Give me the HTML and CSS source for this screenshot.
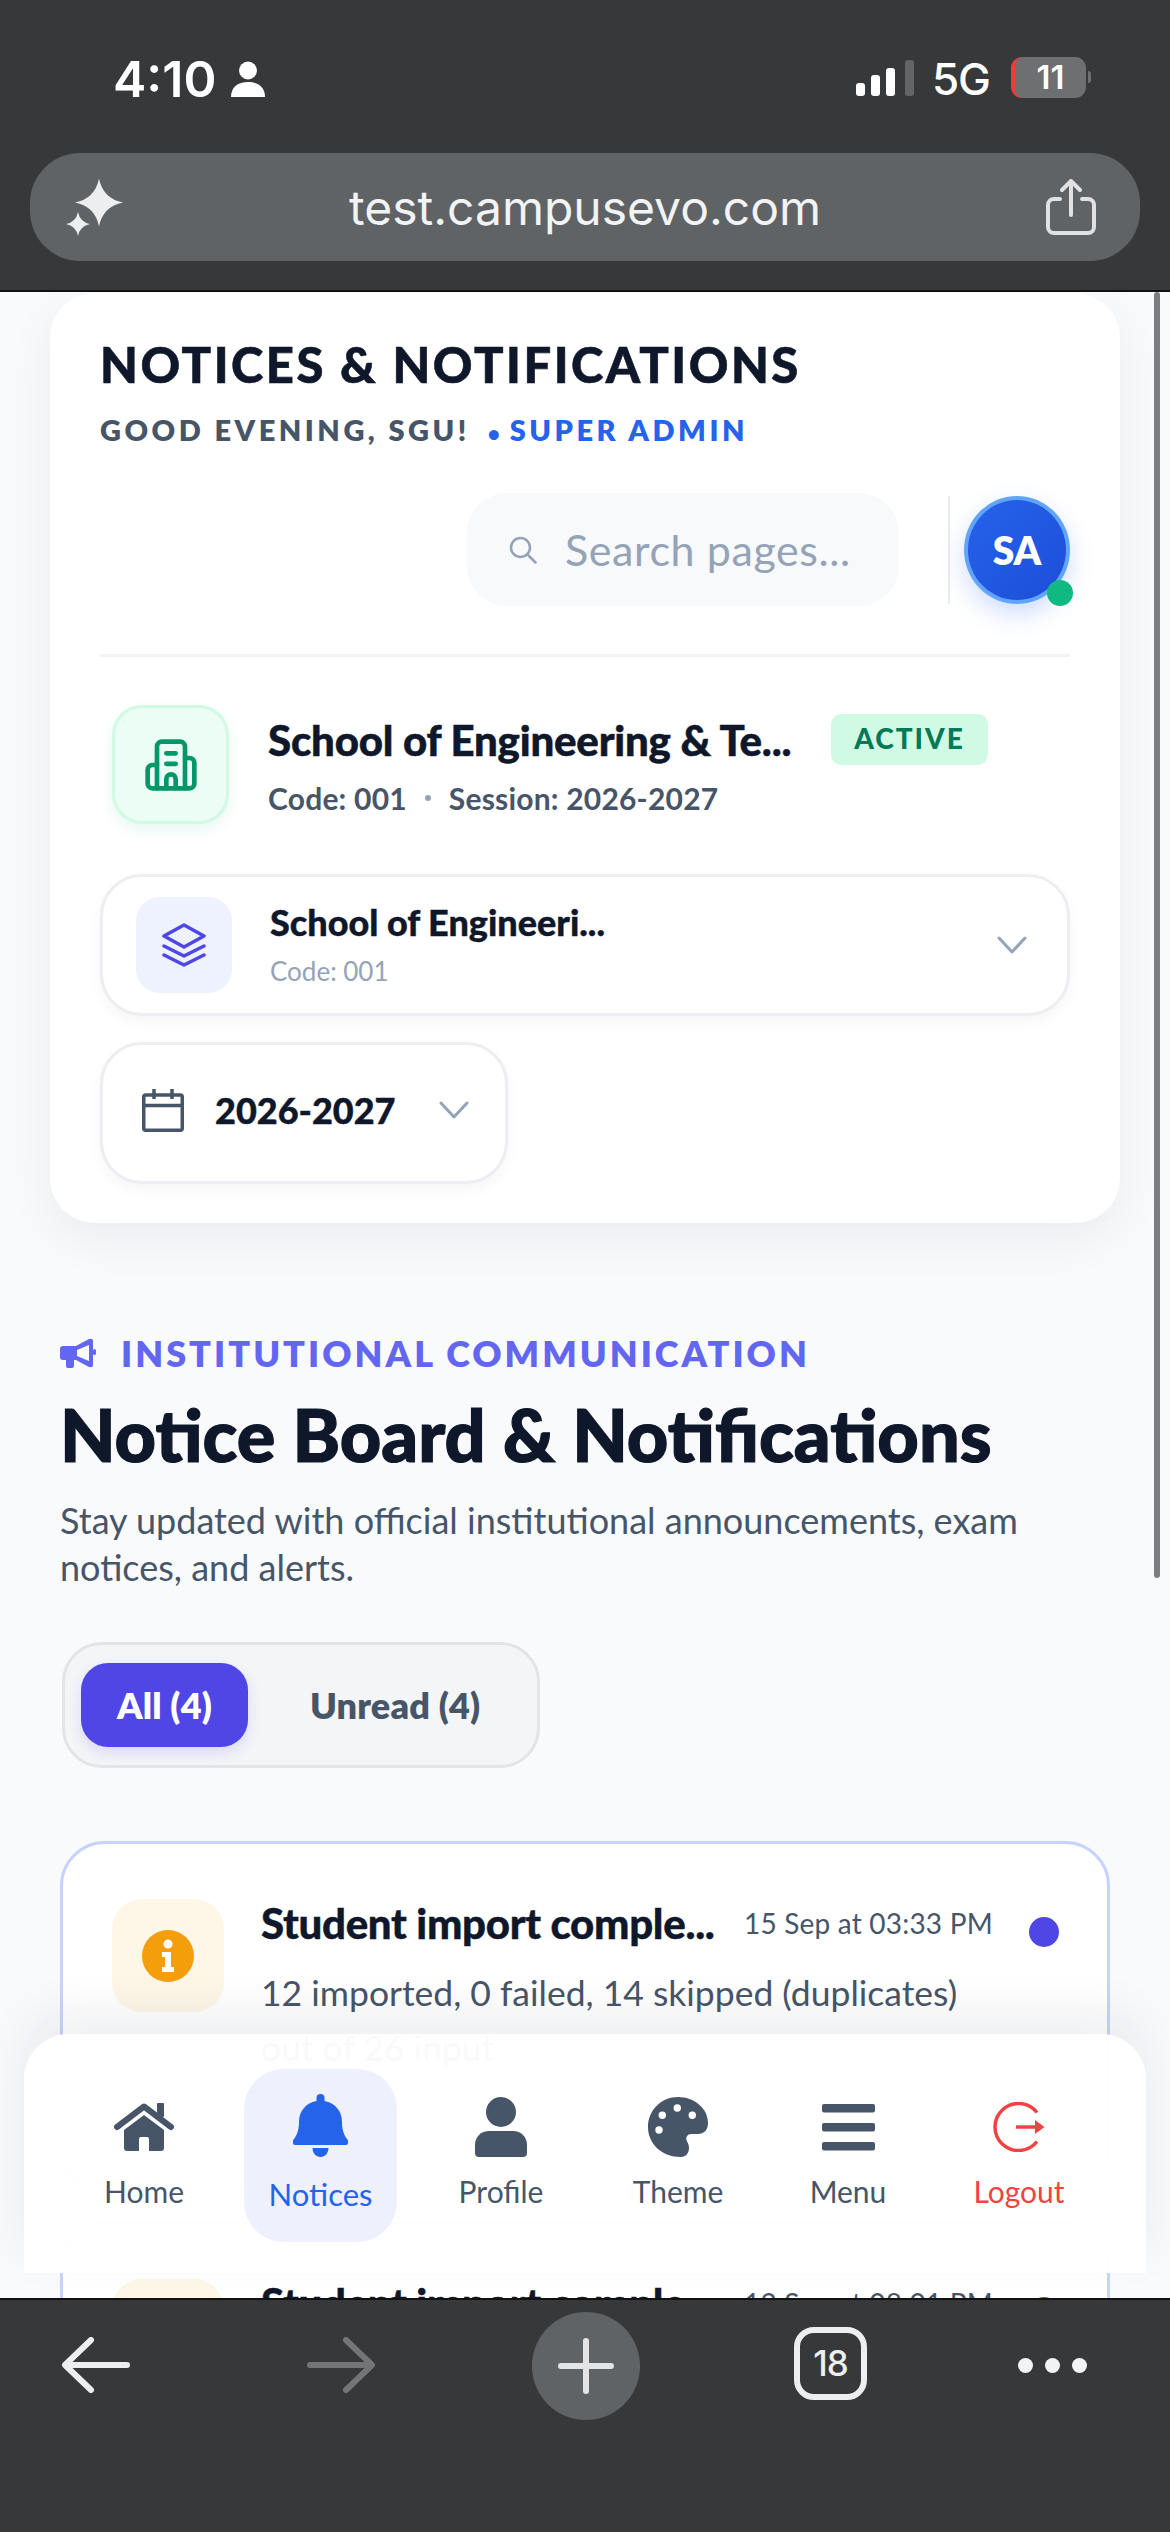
FILE: index.html
```html
<!DOCTYPE html>
<html lang="en">
<head>
  <meta charset="UTF-8">
  <meta name="viewport" content="width=device-width, initial-scale=1.0">
  <title>Notices &amp; Notifications</title>
  <link rel="stylesheet" href="styles.css">
</head>
<body>

  <header class="browser-top">
    <div class="status">
      <div class="status-left">
        <span class="time">4:10</span>
        <svg class="person" viewBox="0 0 34 36"><circle cx="17" cy="9.5" r="9"/><path d="M0 36c0-10 7-15 17-15s17 5 17 15z"/></svg>
      </div>
      <div class="status-right">
        <svg class="signal" viewBox="0 0 58 36">
          <rect x="0" y="23" width="9" height="13" rx="3" fill="#fff"/>
          <rect x="15" y="15" width="9" height="21" rx="3" fill="#fff"/>
          <rect x="30" y="8" width="9" height="28" rx="3" fill="#fff"/>
          <rect x="49" y="0" width="9" height="36" rx="3" fill="#636567"/>
        </svg>
        <span class="net">5G</span>
        <div class="battery"><span>11</span></div>
        <i class="battery-nub"></i>
      </div>
    </div>
    <div class="url-pill">
      <svg class="sparkle" viewBox="0 0 58 58" fill="#eceeef">
        <path d="M33 .5Q37 20.500 57 24.500 37 28.500 33 48.500 29 28.500 9 24.500 29 20.500 33 .5z"/>
        <path d="M12 34Q14 44 24 46 14 48 12 58 10 48 0 46 10 44 12 34z"/>
      </svg>
      <span class="url">test.campusevo.com</span>
      <svg class="share" viewBox="0 0 50 56" fill="none" stroke="#dfe1e2" stroke-width="4" stroke-linecap="round" stroke-linejoin="round">
        <path d="M14 20H8a6 6 0 0 0-6 6v22a6 6 0 0 0 6 6h34a6 6 0 0 0 6-6V26a6 6 0 0 0-6-6h-6"/>
        <path d="M25 36V3M16 11l9-9 9 9"/>
      </svg>
    </div>
  </header>

  <main class="page">
    <section class="top-card">
      <h2 class="page-title">NOTICES &amp; NOTIFICATIONS</h2>
      <p class="greeting">GOOD EVENING, SGU! <span class="role"><span class="role-dot">&bull;</span> SUPER ADMIN</span></p>

      <div class="toolbar">
        <div class="search">
          <svg class="search-icon" viewBox="0 0 28 28" fill="none" stroke="#94a3b8" stroke-width="2.500" stroke-linecap="round"><circle cx="11.500" cy="11.500" r="9.500"/><path d="M18.500 18.500l8 8"/></svg>
          <span>Search pages...</span>
        </div>
        <div class="toolbar-line"></div>
        <div class="avatar">SA<i class="online"></i></div>
      </div>

      <div class="institution">
        <div class="inst-tile">
          <svg viewBox="0 0 24 24" fill="none" stroke="#059669" stroke-width="2" stroke-linecap="round" stroke-linejoin="round"><path d="M6 22V4a2 2 0 0 1 2-2h8a2 2 0 0 1 2 2v18z"/><path d="M6 12H4a2 2 0 0 0-2 2v6a2 2 0 0 0 2 2h2"/><path d="M18 9h2a2 2 0 0 1 2 2v9a2 2 0 0 1-2 2h-2"/><path d="M10 7h4M10 11.500h4M10 22v-4a2 2 0 0 1 4 0v4"/></svg>
        </div>
        <div class="inst-text">
          <div class="inst-head">
            <span class="inst-name">School of Engineering &amp; Te...</span>
            <span class="badge">ACTIVE</span>
          </div>
          <div class="inst-meta">Code: 001 <i class="sep"></i> Session: 2026-2027</div>
        </div>
      </div>

      <div class="select select-wide">
        <div class="layers-tile">
          <svg viewBox="0 0 44 44" fill="none" stroke="#4f46e5" stroke-width="3.500" stroke-linecap="round" stroke-linejoin="round"><path d="M22 2l20 11-20 11L2 13z"/><path d="M2 23l20 10 20-10"/><path d="M2 32l20 10 20-10"/></svg>
        </div>
        <div class="select-text">
          <div class="select-name">School of Engineeri...</div>
          <div class="select-code">Code: 001</div>
        </div>
        <svg class="chevron chevron-end" viewBox="0 0 30 18" fill="none" stroke="#94a3b8" stroke-width="3" stroke-linecap="round" stroke-linejoin="round"><path d="M2 2l13 14L28 2"/></svg>
      </div>

      <div class="select select-small">
        <svg class="calendar" viewBox="0 0 42 43" fill="none" stroke="#475569" stroke-width="3.500"><rect x="1.750" y="6" width="38.500" height="35.250" rx="2"/><path d="M1.750 16.500h38.500M12 0v10M30 0v10"/></svg>
        <span class="select-name">2026-2027</span>
        <svg class="chevron" viewBox="0 0 30 18" fill="none" stroke="#94a3b8" stroke-width="3" stroke-linecap="round" stroke-linejoin="round"><path d="M2 2l13 14L28 2"/></svg>
      </div>
    </section>

    <section class="board">
      <div class="eyebrow">
        <svg viewBox="0 0 36 30" fill="#6366f1"><path fill-rule="evenodd" d="M3 8h13L28 1.500C30 .2 33 .5 33 3v24c0 2.500-3 2.800-5 1.500L16 22h-2v6a2 2 0 0 1-2 2H8a2 2 0 0 1-2-2v-6H3a3 3 0 0 1-3-3v-8a3 3 0 0 1 3-3zM17 12v6l12 5V7z"/><rect x="33" y="11" width="3" height="6" rx="1.500"/></svg>
        <span>INSTITUTIONAL COMMUNICATION</span>
      </div>
      <h1 class="board-title">Notice Board &amp; Notifications</h1>
      <p class="board-desc">Stay updated with official institutional announcements, exam notices, and alerts.</p>

      <div class="tabs">
        <button class="tab tab-on">All (4)</button>
        <button class="tab">Unread (4)</button>
      </div>

      <div class="notice">
        <div class="notice-tile"><svg viewBox="0 0 52 52"><circle cx="26" cy="26" r="26" fill="#f59e0b"/><circle cx="26" cy="14" r="4.500" fill="#fff"/><path d="M20 22h9v15h3v5H20v-5h3V27h-3z" fill="#fff"/></svg></div>
        <div class="notice-body">
          <div class="notice-head">
            <span class="notice-title">Student import comple...</span>
            <span class="notice-date">15 Sep at 03:33 PM</span>
            <i class="unread-dot"></i>
          </div>
          <p class="notice-text">12 imported, 0 failed, 14 skipped (duplicates) out of 26 input</p>
        </div>
      </div>

      <div class="notice">
        <div class="notice-tile"></div>
        <div class="notice-body">
          <div class="notice-head">
            <span class="notice-title">Student import comple...</span>
            <span class="notice-date">12 Sep at 08:01 PM</span>
            <i class="unread-dot"></i>
          </div>
        </div>
      </div>
    </section>

    <div class="scroll-thumb"></div>
  </main>

  <nav class="tabbar">
    <a class="tabbar-item">
      <svg class="ic-home" viewBox="0 0 60 48"><path d="M3 24L30 3.500 57 24" fill="none" stroke="#475569" stroke-width="6" stroke-linecap="round" stroke-linejoin="round"/><rect x="43" y="0" width="7" height="14" rx="1" fill="#475569"/><path d="M10 27L30 12l20 15v18a3 3 0 0 1-3 3H35V36a2 2 0 0 0-2-2h-6a2 2 0 0 0-2 2v12H13a3 3 0 0 1-3-3z" fill="#475569"/></svg>
      <span>Home</span>
    </a>
    <a class="tabbar-item tabbar-on">
      <svg class="ic-bell" viewBox="0 0 55 63" fill="#2563eb"><path d="M27.500 0a4 4 0 0 1 4 4v3C42 9 49 17 49 28c0 8 2 13 5 17 1.500 2 1.500 3 1 4.500-.6 1-1.500 1.500-3 1.500H3c-1.500 0-2.400-.5-3-1.500-.5-1.500-.5-2.500 1-4.500 3-4 5-9 5-17C6 17 13 9 23.500 7V4a4 4 0 0 1 4-4z"/><path d="M19.500 54h16c0 5-3.500 9-8 9s-8-4-8-9z"/></svg>
      <span>Notices</span>
    </a>
    <a class="tabbar-item">
      <svg class="ic-user" viewBox="0 0 52 60" fill="#475569"><circle cx="26" cy="15" r="15"/><path d="M14 34h24c8 0 14 6 14 14v8a4 4 0 0 1-4 4H4a4 4 0 0 1-4-4v-8c0-8 6-14 14-14z"/></svg>
      <span>Profile</span>
    </a>
    <a class="tabbar-item">
      <svg class="ic-palette" viewBox="0 0 60 60"><path d="M30 0c16 0 30 11 30 26 0 7-4 11-10 11h-7c-3 0-5.500 3-4.500 6 .8 2.500 2.500 4 2.500 8 0 5-3 9-8 9C14 60 0 47 0 30S13.500 0 30 0z" fill="#475569"/><circle cx="29.300" cy="11" r="3.700" fill="#fff"/><circle cx="14.300" cy="18.300" r="3.700" fill="#fff"/><circle cx="44.300" cy="18.300" r="3.700" fill="#fff"/><circle cx="11" cy="33" r="3.700" fill="#fff"/></svg>
      <span>Theme</span>
    </a>
    <a class="tabbar-item">
      <svg class="ic-menu" viewBox="0 0 53 47" fill="#475569"><rect width="53" height="8.500" rx="2"/><rect y="19" width="53" height="8.500" rx="2"/><rect y="38" width="53" height="8.500" rx="2"/></svg>
      <span>Menu</span>
    </a>
    <a class="tabbar-item tabbar-red">
      <svg class="ic-logout" viewBox="0 0 52 50" fill="none" stroke="#ef4444" stroke-width="3.500"><path d="M44 10.500A23.500 23.500 0 1 0 44 39.500"/><path d="M23 25h22"/><path d="M42 18l9.500 7-9.500 7z" fill="#ef4444" stroke="none"/></svg>
      <span>Logout</span>
    </a>
  </nav>

  <footer class="browser-bottom">
    <svg class="nav-arrow" viewBox="0 0 68 56" fill="none" stroke="#eceeef" stroke-width="6" stroke-linecap="round" stroke-linejoin="round"><path d="M29 3L3 28l26 25M4 28h61"/></svg>
    <svg class="nav-arrow" viewBox="0 0 68 56" fill="none" stroke="#737577" stroke-width="6" stroke-linecap="round" stroke-linejoin="round"><path d="M39 3l26 25-26 25M64 28H3"/></svg>
    <div class="plus-btn"><svg viewBox="0 0 56 56" fill="none" stroke="#e2e4e5" stroke-width="6" stroke-linecap="round"><path d="M28 3v50M3 28h50"/></svg></div>
    <div class="tab-count">18</div>
    <div class="more-dots"><i></i><i></i><i></i></div>
  </footer>

</body>
</html>
```

FILE: styles.css
```css
* {
  box-sizing: border-box;
}
html, body {
  margin: 0;
  padding: 0;
}
body {
  position: relative;
  width: 1170px;
  height: 2532px;
  overflow: hidden;
  display: flex;
  flex-direction: column;
  background-color: #36383a;
  font-family: Lato, "Noto Sans", sans-serif;
}
svg {
  display: block;
}

/* browser chrome, top */
.browser-top {
  height: 292px;
  flex: none;
  background-color: #36383a;
  border-bottom: 2px solid #111;
  padding: 0 30px;
  font-family: Inter, "Liberation Sans", sans-serif;
  color: #fff;
}
.status {
  display: flex;
  justify-content: space-between;
  height: 153px;
  padding: 56px 49px 0 83px;
}
.status-left, .status-right {
  display: flex;
  align-items: flex-start;
}
.time {
  font-size: 50px;
  line-height: 46px;
  font-weight: 600;
  letter-spacing: 0;
}
.person {
  width: 34px;
  height: 36px;
  margin: 5px 0 0 15px;
  fill: #fff;
}
.signal {
  width: 58px;
  height: 36px;
  margin-top: 4px;
}
.net {
  font-size: 44px;
  line-height: 46px;
  font-weight: 500;
  margin-left: 18px;
  letter-spacing: -1px;
}
.battery {
  width: 75px;
  height: 41px;
  margin: 1px 0 0 21px;
  border-radius: 11px;
  background: #6e6f71;
  border-left: 4px solid #ef3b3b;
  font-size: 33px;
  font-weight: 600;
  line-height: 41px;
  text-align: center;
}
.battery-nub {
  width: 3px;
  height: 12px;
  margin: 15px 0 0 2px;
  background: #6e6f71;
  border-radius: 0 3px 3px 0;
}
.url-pill {
  position: relative;
  height: 108px;
  border-radius: 50px;
  background-color: #5f6366;
  display: flex;
  align-items: center;
  justify-content: space-between;
  padding: 0 44px 0 36px;
}
.sparkle {
  width: 58px;
  height: 58px;
}
.share {
  width: 50px;
  height: 56px;
}
.url {
  font-size: 48px;
  color: #f2f3f4;
  letter-spacing: 0;
}

/* page */
.page {
  position: relative;
  flex: 1;
  overflow: hidden;
  background-color: #f9fafc;
}
.scroll-thumb {
  position: absolute;
  right: 10px;
  top: 0;
  width: 6px;
  height: 1286px;
  background: #7b7d80;
  border-radius: 3px;
}
.top-card {
  width: 1070px;
  margin: 1px 0 0 50px;
  padding: 41px 50px 39px;
  background: #fff;
  border-radius: 45px;
  box-shadow: 0 16px 50px rgba(15, 23, 42, .06);
}
.page-title {
  margin: 0;
  font-size: 49px;
  line-height: 60px;
  font-weight: 900;
  color: #0f172a;
  letter-spacing: 2.5px;
  -webkit-text-stroke: .6px #0f172a;
}
.greeting {
  margin: 16px 0 0;
  font-size: 29px;
  line-height: 40px;
  font-weight: 800;
  color: #475569;
  letter-spacing: 3.5px;
}
.role {
  color: #2563eb;
  margin-left: 8px;
}
.role-dot {
  font-size: 20px;
  letter-spacing: 0;
}
.toolbar {
  display: flex;
  justify-content: flex-end;
  align-items: center;
  height: 113px;
  margin-top: 40px;
}
.search {
  display: flex;
  align-items: center;
  width: 432px;
  height: 113px;
  padding-left: 42px;
  gap: 28px;
  background: #f8f9fa;
  border-radius: 40px;
  font-size: 43px;
  letter-spacing: .6px;
  color: #94a3b8;
}
.search-icon {
  width: 28px;
  height: 28px;
}
.toolbar-line {
  width: 2px;
  height: 108px;
  margin-left: 49px;
  background: #e9ebee;
}
.avatar {
  position: relative;
  width: 106px;
  height: 108px;
  margin-left: 14px;
  border-radius: 50%;
  background: linear-gradient(135deg, #2563eb, #1d4ed8);
  border: 4px solid #60a5fa;
  box-shadow: 0 10px 24px rgba(37, 99, 235, .22);
  color: #fff;
  font-size: 39px;
  font-weight: 800;
  line-height: 100px;
  text-align: center;
}
.online {
  position: absolute;
  right: -7px;
  bottom: -6px;
  width: 26px;
  height: 26px;
  border-radius: 50%;
  background: #10b981;
}
.institution {
  display: flex;
  align-items: center;
  gap: 39px;
  margin-top: 48px;
  padding: 48px 0 50px 12px;
  border-top: 3px solid #f1f3f5;
}
.inst-tile {
  width: 117px;
  height: 119px;
  flex: none;
  display: flex;
  align-items: center;
  justify-content: center;
  border-radius: 30px;
  background: #ecfdf5;
  border: 3px solid #d1fae5;
  box-shadow: 0 6px 14px rgba(16, 185, 129, .1);
}
.inst-tile svg {
  width: 56px;
  height: 56px;
}
.inst-head {
  display: flex;
  align-items: center;
  gap: 40px;
  height: 52px;
}
.inst-name {
  font-size: 42px;
  line-height: 50px;
  font-weight: 900;
  color: #0f172a;
  letter-spacing: -.2px;
  -webkit-text-stroke: .5px #0f172a;
}
.badge {
  padding: 0 23px;
  height: 51px;
  line-height: 49px;
  border-radius: 10px;
  background: #d1fae5;
  color: #047857;
  font-size: 28px;
  font-weight: 900;
  letter-spacing: 2px;
}
.inst-meta {
  display: flex;
  align-items: center;
  gap: 18px;
  margin-top: 14px;
  font-size: 30px;
  line-height: 36px;
  font-weight: 700;
  color: #475569;
  letter-spacing: .2px;
}
.sep {
  width: 6px;
  height: 6px;
  border-radius: 50%;
  background: #94a3b8;
}
.select {
  display: flex;
  align-items: center;
  height: 142px;
  background: #fff;
  border: 3px solid #eceef1;
  border-radius: 42px;
  box-shadow: 0 6px 14px rgba(15, 23, 42, .04);
}
.select-wide {
  padding: 0 22px 0 33px;
  gap: 38px;
}
.select-small {
  width: 408px;
  margin-top: 26px;
  padding: 0 0 6px 39px;
  gap: 31px;
}
.layers-tile {
  width: 96px;
  height: 96px;
  display: flex;
  align-items: center;
  justify-content: center;
  background: #eef2ff;
  border-radius: 24px;
}
.layers-tile svg {
  width: 44px;
  height: 44px;
}
.select-text {
  flex: 1;
  margin-top: -4px;
}
.select-name {
  font-size: 36px;
  line-height: 46px;
  font-weight: 900;
  color: #0f172a;
  -webkit-text-stroke: .4px #0f172a;
}
.select-code {
  margin-top: 10px;
  font-size: 26px;
  line-height: 32px;
  color: #94a3b8;
}
.calendar {
  width: 42px;
  height: 43px;
}
.chevron {
  width: 30px;
  height: 18px;
  margin-left: 12px;
}
.chevron-end {
  margin: 0 18px 0 0;
}

/* notice board */
.board {
  padding: 108px 60px 0;
}
.eyebrow {
  display: flex;
  align-items: center;
  gap: 25px;
  height: 44px;
  font-size: 36px;
  font-weight: 800;
  color: #6366f1;
  letter-spacing: 3px;
}
.eyebrow svg {
  width: 36px;
  height: 30px;
}
.board-title {
  margin: 19px 0 0;
  font-size: 72px;
  line-height: 80px;
  font-weight: 900;
  color: #0f172a;
  letter-spacing: 0;
  -webkit-text-stroke: 1.2px #0f172a;
  white-space: nowrap;
}
.board-desc {
  margin: 23px 0 0;
  width: 980px;
  font-size: 36px;
  line-height: 47px;
  color: #475569;
}
.tabs {
  display: inline-flex;
  align-items: center;
  width: 478px;
  height: 126px;
  margin: 51px 0 0 2px;
  padding-left: 16px;
  gap: 62px;
  background: #f3f5f7;
  border: 3px solid #e2e4e8;
  border-radius: 40px;
}
.tab {
  border: none;
  padding: 0;
  background: none;
  font-family: inherit;
  font-size: 36px;
  font-weight: 800;
  color: #475569;
  letter-spacing: .2px;
}
.tab-on {
  width: 167px;
  height: 84px;
  background: #4f46e5;
  color: #fff;
  border-radius: 27px;
  box-shadow: 0 6px 14px rgba(79, 70, 229, .15);
}
.notice {
  display: flex;
  gap: 37px;
  width: 1050px;
  height: 353px;
  margin: 73px 0 -46px;
  padding: 55px 49px 0;
  background: #fff;
  border: 3px solid #c7d2fe;
  border-radius: 45px;
}
.notice + .notice {
  height: 300px;
}
.notice-tile {
  width: 112px;
  height: 113px;
  flex: none;
  display: flex;
  align-items: center;
  justify-content: center;
  background: #fef6e7;
  border-radius: 30px;
}
.notice-tile svg {
  width: 52px;
  height: 52px;
}
.notice-body {
  flex: 1;
}
.notice-head {
  display: flex;
  align-items: center;
  height: 48px;
}
.notice-title {
  width: 483px;
  font-size: 42px;
  font-weight: 900;
  color: #0f172a;
  letter-spacing: -.3px;
  -webkit-text-stroke: .4px #0f172a;
  white-space: nowrap;
}
.notice-date {
  width: 285px;
  font-size: 28px;
  letter-spacing: .2px;
  color: #475569;
  white-space: nowrap;
}
.unread-dot {
  width: 30px;
  height: 30px;
  margin-top: 18px;
  border-radius: 50%;
  background: #4f46e5;
}
.notice-text {
  margin: 18px 0 0;
  width: 720px;
  font-size: 35.5px;
  line-height: 55px;
  color: #475569;
}

/* floating nav */
.tabbar {
  position: absolute;
  left: 24px;
  top: 2034px;
  width: 1122px;
  height: 239px;
  display: grid;
  grid-template-columns: 200px 153px 208px 146px 194px 148px;
  padding: 35px 0 0 20px;
  background: rgba(255, 255, 255, .97);
  border-radius: 45px 45px 0 0;
  box-shadow: 0 -22px 50px rgba(15, 23, 42, .07);
}
.tabbar-item {
  display: flex;
  flex-direction: column;
  align-items: center;
  height: 173px;
  padding-bottom: 33px;
  font-size: 30px;
  line-height: 36px;
  color: #475569;
}
.tabbar-item span {
  margin-top: auto;
}
.tabbar-on {
  background: #eef0fd;
  border-radius: 40px;
  color: #2563eb;
  padding-top: 25px;
  padding-bottom: 30px;
  font-size: 31px;
}
.tabbar-red {
  color: #ef4444;
}
.ic-home {
  width: 60px;
  height: 48px;
  margin-top: 34px;
}
.ic-bell {
  width: 55px;
  height: 63px;
}
.ic-user {
  width: 52px;
  height: 60px;
  margin-top: 28px;
}
.ic-palette {
  width: 60px;
  height: 60px;
  margin-top: 28px;
}
.ic-menu {
  width: 53px;
  height: 47px;
  margin-top: 35px;
}
.ic-logout {
  width: 52px;
  height: 50px;
  margin-top: 33px;
}

/* browser chrome, bottom */
.browser-bottom {
  height: 234px;
  flex: none;
  display: grid;
  grid-template-columns: repeat(5, 245px);
  justify-items: center;
  align-items: start;
  padding: 12px 0 0 0;
  margin-left: -27px;
  background-color: #36383a;
  border-top: 2px solid #111;
  width: 1197px;
  font-family: Inter, "Liberation Sans", sans-serif;
}
.nav-arrow {
  width: 68px;
  height: 56px;
  margin-top: 25px;
}
.plus-btn {
  width: 108px;
  height: 108px;
  display: flex;
  align-items: center;
  justify-content: center;
  border-radius: 50%;
  background: #5f6366;
}
.plus-btn svg {
  width: 56px;
  height: 56px;
}
.tab-count {
  width: 73px;
  height: 73px;
  margin-top: 15px;
  border: 6px solid #eceeef;
  border-radius: 20px;
  color: #eceeef;
  font-size: 35px;
  font-weight: 500;
  letter-spacing: -1px;
  line-height: 61px;
  text-align: center;
}
.more-dots {
  display: flex;
  gap: 12px;
  margin: 46px 46px 0 0;
}
.more-dots i {
  width: 15px;
  height: 15px;
  border-radius: 50%;
  background: #f2f3f4;
}
```
